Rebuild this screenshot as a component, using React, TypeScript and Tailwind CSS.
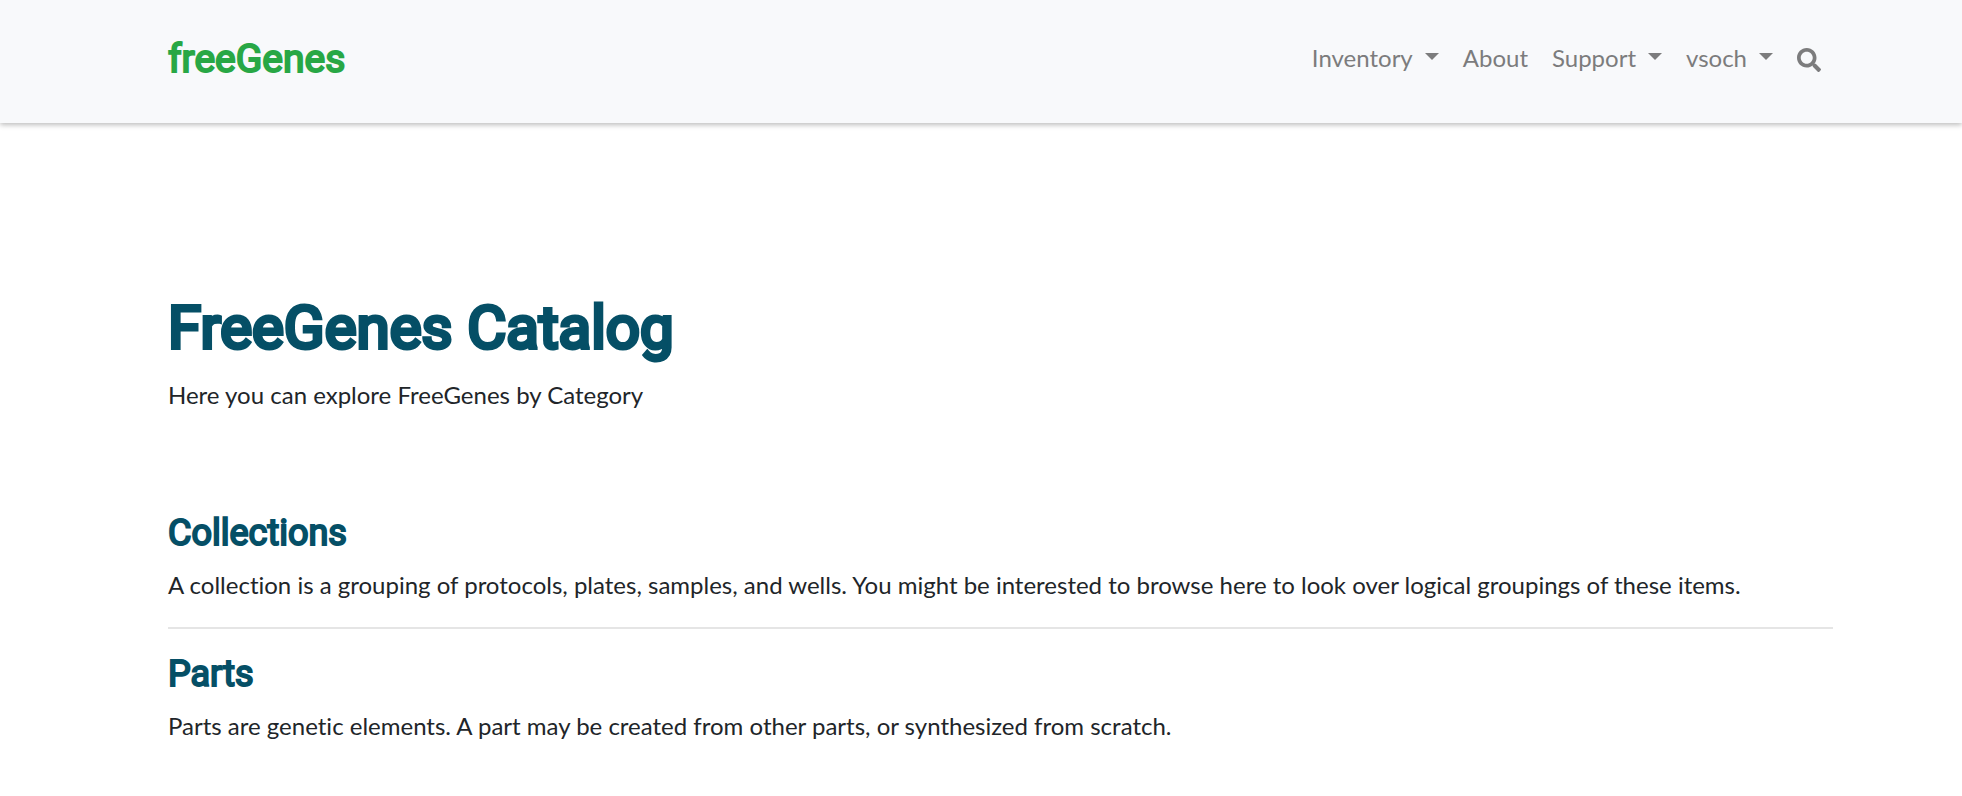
import { FaSearch } from "react-icons/fa";

function Menu({ label }: { label: string }) {
  return (
    <button type="button" className="flex items-start gap-3 whitespace-nowrap">
      {label}
      <span className="mt-[13px] border-x-7 border-t-7 border-x-transparent border-t-current" />
    </button>
  );
}

const sections = [
  { title: "Collections", text: "A collection is a grouping of protocols, plates, samples, and wells. You might be interested to browse here to look over logical groupings of these items." },
  { title: "Parts", text: "Parts are genetic elements. A part may be created from other parts, or synthesized from scratch." },
];

export default function App() {
  return (
    <div className="min-h-screen bg-white font-['Lato',sans-serif] text-2xl leading-9 text-[#212529] [font-variant-ligatures:none]">
      <header className="bg-[#f8f9fb] pr-[129px] pl-[168px] shadow-[0_2px_5px_rgba(0,0,0,0.26)]">
        <div className="flex h-[123px] items-start justify-between pt-10">
          <a href="#" className="font-['Roboto',sans-serif] text-[39px] leading-[38px] font-normal text-[#28a745] [-webkit-text-stroke:2px_currentColor]">freeGenes</a>
          <nav className="flex items-start gap-6 pr-3 text-[#7c7c7d]">
            <Menu label="Inventory" />
            <a href="#">About</a>
            <Menu label="Support" />
            <Menu label="vsoch" />
            <button type="button" aria-label="Search" className="pt-2"><FaSearch /></button>
          </nav>
        </div>
      </header>
      <main className="pt-[169px] pr-[129px] pl-[168px]">
        <h1 className="font-['Roboto',sans-serif] text-6xl leading-[72px] font-normal text-[#054f66] [-webkit-text-stroke:4px_currentColor]">FreeGenes Catalog</h1>
        <p className="mt-[13px]">Here you can explore FreeGenes by Category</p>
        <div className="mt-[99px] divide-y-2 divide-[#e5e5e5]">
          {sections.map((s) => (
            <section key={s.title} className="pb-6 not-first:pt-6">
              <h2 className="mb-3 font-['Roboto',sans-serif] text-4xl leading-[43px] font-normal text-[#054f66] [-webkit-text-stroke:2px_currentColor]">{s.title}</h2>
              <p>{s.text}</p>
            </section>
          ))}
        </div>
      </main>
    </div>
  );
}
